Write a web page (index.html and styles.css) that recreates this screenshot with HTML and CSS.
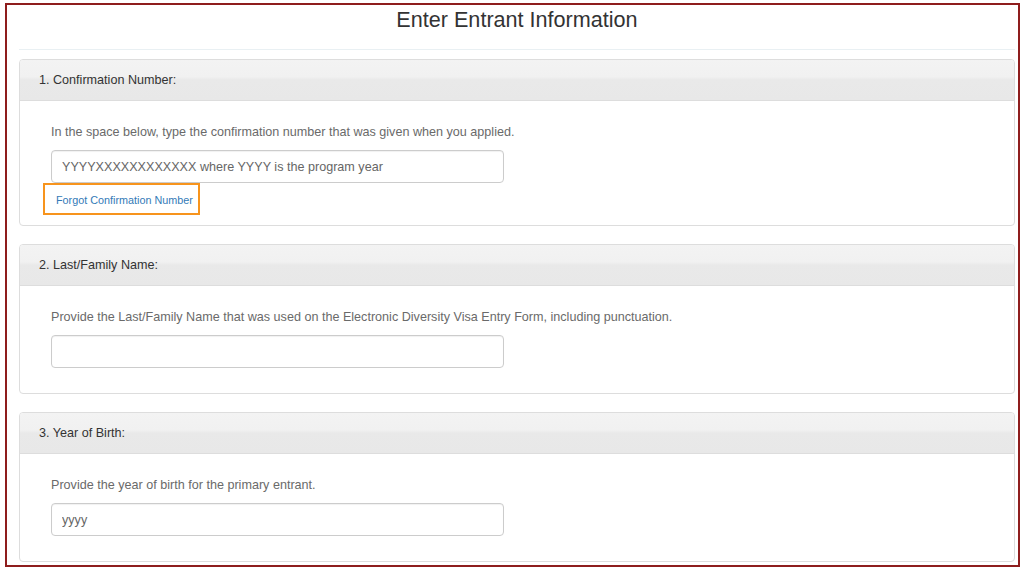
FILE: index.html
```html
<!DOCTYPE html>
<html lang="en">
<head>
<meta charset="utf-8">
<title>Enter Entrant Information</title>
<link rel="stylesheet" href="styles.css">
</head>
<body>
<div class="frame">
  <h1 class="title">Enter Entrant Information</h1>
  <hr class="rule">

  <section class="panel">
    <div class="panel-heading">1. Confirmation Number:</div>
    <div class="panel-body panel-body-compact">
      <p class="help">In the space below, type the confirmation number that was given when you applied.</p>
      <input class="field" type="text" placeholder="YYYYXXXXXXXXXXXX where YYYY is the program year">
      <div class="link-box"><a class="link" href="#">Forgot Confirmation Number</a></div>
    </div>
  </section>

  <section class="panel">
    <div class="panel-heading">2. Last/Family Name:</div>
    <div class="panel-body">
      <p class="help">Provide the Last/Family Name that was used on the Electronic Diversity Visa Entry Form, including punctuation.</p>
      <input class="field" type="text">
    </div>
  </section>

  <section class="panel">
    <div class="panel-heading">3. Year of Birth:</div>
    <div class="panel-body">
      <p class="help">Provide the year of birth for the primary entrant.</p>
      <input class="field" type="text" placeholder="yyyy">
    </div>
  </section>
</div>
</body>
</html>
```

FILE: styles.css
```css
* { box-sizing: border-box; }

html, body {
  margin: 0;
  padding: 0;
  background: #ffffff;
  font-family: "Liberation Sans", Arial, sans-serif;
}

.frame {
  margin: 3px 4px 0 5px;
  border: 2px solid #8e1d1d;
  padding: 0 3px 3px 12px;
  background: #ffffff;
}

.title {
  margin: 1px 0 0 0;
  font-size: 21.6px;
  font-weight: normal;
  line-height: 28px;
  text-align: center;
  color: #333333;
}

.rule {
  margin: 15px 0 9px 0;
  border: 0;
  border-top: 1px solid #e9f0f3;
  height: 0;
}

.panel {
  border: 1px solid #dddddd;
  border-radius: 4px;
  margin-bottom: 18px;
  background: #ffffff;
}

.panel:last-child { margin-bottom: 0; }

.panel-heading {
  height: 41px;
  padding: 0 19px;
  line-height: 40px;
  font-size: 12.6px;
  color: #333333;
  border-bottom: 1px solid #dddddd;
  border-radius: 3px 3px 0 0;
  background: linear-gradient(to bottom, #f3f3f3 0%, #f1f1f1 42%, #e9e9e9 50%, #e8e8e8 100%);
}

.panel-body {
  padding: 22px 31px 25px 31px;
}

.panel-body-compact {
  padding-bottom: 10px;
}

.help {
  margin: 0 0 9px 0;
  font-size: 12.6px;
  line-height: 18px;
  color: #6a6a6a;
}

.field {
  display: block;
  width: 453px;
  height: 33px;
  padding: 0 10px;
  border: 1px solid #cccccc;
  border-radius: 4px;
  font-family: inherit;
  font-size: 12.6px;
  color: #555555;
  background: #ffffff;
  box-shadow: inset 0 1px 1px rgba(0, 0, 0, 0.06);
}

.field::placeholder {
  color: #666666;
  opacity: 1;
}

.link-box {
  width: 157px;
  height: 32px;
  margin-left: -8px;
  padding-left: 11px;
  border: 2px solid #f7941d;
  line-height: 28px;
}

.link {
  font-size: 10.8px;
  color: #337ab7;
  text-decoration: none;
}
```
